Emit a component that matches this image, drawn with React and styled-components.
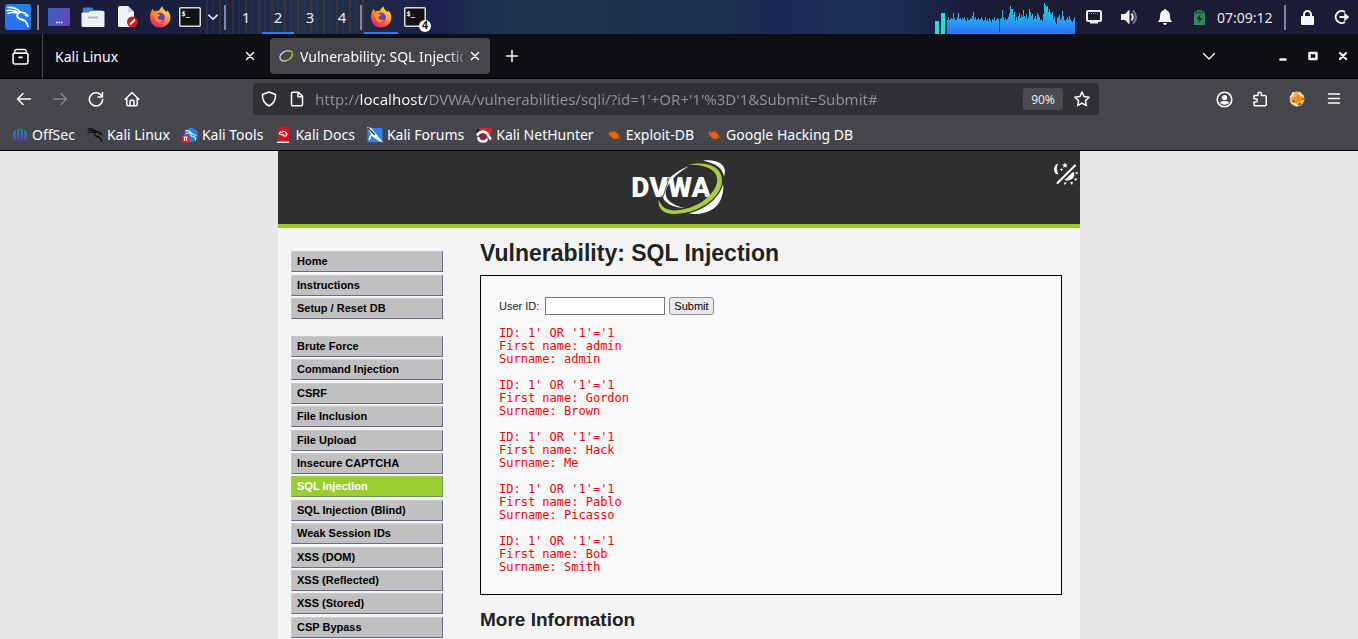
import { useState } from "react";
import styled, { createGlobalStyle } from "styled-components";

const GlobalStyle = createGlobalStyle`
    * {
        box-sizing: border-box;
    }
    html, body {
        margin: 0;
        padding: 0;
    }
    body {
        background: #e7e7e7;
        font-family: "Noto Sans", sans-serif;
        font-size: 14px;
        overflow: hidden;
    }
    button, input {
        font: inherit;
        margin: 0;
    }
    ul {
        list-style: none;
        margin: 0;
        padding: 0;
    }
    svg {
        display: block;
        flex: none;
    }
`;

const Screen = styled.div`
    height: 100vh;
    display: flex;
    flex-direction: column;
    overflow: hidden;
`;

const IconButton = styled.button`
    display: flex;
    align-items: center;
    justify-content: center;
    flex: none;
    width: ${(p) => p.$width || 36}px;
    height: 32px;
    padding: 0;
    border: 0;
    background: none;
    color: ${(p) => (p.$dim ? "#85858c" : "#fbfbfe")};
`;

/* ---------- desktop panel ---------- */

const Panel = styled.header`
    display: flex;
    align-items: stretch;
    height: 34px;
    flex: none;
    color: #e8e8ee;
    background: linear-gradient(90deg, #1a1b34 0%, #1b1f40 14%, #1d2440 17%, #23304a 22%, #232a40 27%, #1b2150 32%, #1f3450 37%, #1e3450 44%, #1d3152 52%, #1b2652 57%, #1d3058 63%, #1b2850 67%, #1b1b34 72%, #1b1b34 100%);
`;

const PanelGroup = styled.div`
    display: flex;
    align-items: stretch;
    background: ${(p) => (p.$striped ? "repeating-linear-gradient(90deg, rgba(90, 70, 50, 0.35) 0 2px, transparent 2px 6px, rgba(30, 60, 120, 0.35) 6px 8px, transparent 8px 13px)" : "none")};
`;

const PanelButton = styled.button`
    display: flex;
    align-items: center;
    justify-content: center;
    width: ${(p) => p.$width}px;
    padding: 0;
    color: inherit;
    background: none;
    border: 0;
    border-top: 2px solid transparent;
    border-bottom: 2px solid ${(p) => (p.$active ? "#2a7fe8" : "transparent")};
    font-size: 15px;
`;

const Divider = styled.span`
    width: 2px;
    height: 25px;
    margin: 0 ${(p) => p.$gap || 0}px;
    align-self: center;
    flex: none;
    background: #85869a;
`;

const Spacer = styled.div`
    flex: 1;
`;

const Clock = styled.time`
    align-self: center;
    width: 65px;
    padding-left: 2px;
    font-size: 14px;
`;

/* ---------- tab strip ---------- */

const TabStrip = styled.div`
    display: flex;
    align-items: center;
    height: 45px;
    flex: none;
    background: #0d0e13;
    border-bottom: 1px solid #000;
    color: #fbfbfe;
`;

const FirefoxView = styled.div`
    display: flex;
    align-items: center;
    justify-content: center;
    align-self: stretch;
    width: 43px;
    padding-right: 2px;
    border-right: 1px solid #45464c;
`;

const Tab = styled.div`
    display: flex;
    align-items: center;
    width: ${(p) => (p.$active ? 220 : 227)}px;
    height: 36px;
    padding: 0 4px 0 ${(p) => (p.$active ? 8 : 12)}px;
    border-radius: 4px;
    background: ${(p) => (p.$active ? "#45464c" : "transparent")};
`;

const TabTitle = styled.button`
    display: flex;
    align-items: center;
    gap: 5px;
    flex: 1;
    min-width: 0;
    padding: 0;
    border: 0;
    background: none;
    color: inherit;
    text-align: left;
    white-space: nowrap;
`;

const TabLabel = styled.span`
    overflow: hidden;
    mask-image: linear-gradient(90deg, #000 90%, transparent 104%);
`;

const WindowControls = styled.div`
    display: flex;
    margin-left: 39px;
`;

/* ---------- navigation bar ---------- */

const NavBar = styled.div`
    display: flex;
    align-items: center;
    height: 40px;
    flex: none;
    padding: 0 6px;
    background: #45464c;
`;

const UrlBox = styled.div`
    display: flex;
    align-items: center;
    flex: 1;
    height: 32px;
    margin: 0 107px 0 103px;
    padding: 0 2px;
    border-radius: 4px;
    background: #303136;
`;

const UrlInput = styled.input`
    flex: 1;
    min-width: 0;
    margin-left: 4px;
    padding: 0;
    border: 0;
    outline: 0;
    font-size: 15px;
    color: transparent;
    background: linear-gradient(90deg, #8f8f96 45px, #fbfbfe 45px 112px, #8f8f96 112px);
    background-clip: text;
`;

const ZoomLevel = styled.button`
    width: 40px;
    height: 22px;
    margin-right: 4px;
    padding: 0;
    border: 0;
    border-radius: 3px;
    background: #4a4b51;
    color: #e6e6ea;
    font-size: 12px;
`;

const Bookmarks = styled.nav`
    display: flex;
    align-items: center;
    gap: 12px;
    height: 32px;
    flex: none;
    padding: 0 12px;
    background: #45464c;
    border-bottom: 1px solid #000;
`;

const Bookmark = styled.a`
    display: flex;
    align-items: center;
    gap: 4px;
    color: #fbfbfe;
    text-decoration: none;
    white-space: nowrap;
`;

/* ---------- DVWA page ---------- */

const PageArea = styled.div`
    flex: 1;
    min-height: 0;
    overflow: hidden;
    background: #e7e7e7;
    font-family: "Liberation Sans", Arial, sans-serif;
    color: #222;
`;

const Container = styled.div`
    max-width: 802px;
    min-height: 100%;
    margin: 0 auto;
    background: #f4f4f4;
`;

const Banner = styled.div`
    display: grid;
    grid-template-columns: 1fr auto 1fr;
    align-items: start;
    padding: 6px 0 8px;
    background: #2f2f2f;
    border-bottom: 4px solid #9cc52b;
`;

const ThemeButton = styled.button`
    justify-self: end;
    margin-top: 4px;
    padding: 0 2px 0 0;
    border: 0;
    background: none;
`;

const Columns = styled.div`
    display: flex;
    gap: 37px;
    padding: 0 18px 0 13px;
`;

const Sidebar = styled.nav`
    display: flex;
    flex-direction: column;
    gap: 17px;
    width: 152px;
    flex: none;
    padding-top: 23px;
`;

const MenuGroup = styled.ul`
    display: flex;
    flex-direction: column;
    justify-content: space-between;
    min-height: ${(p) => p.$minHeight}px;
`;

const MenuLink = styled.a`
    display: block;
    padding: 0 5px;
    border: 1px solid;
    border-color: ${(p) => (p.$active ? "#a3cf48 #6f8f5a #6f8f5a #a3cf48" : "#c9c9c9 #666a8c #666a8c #c9c9c9")};
    background: ${(p) => (p.$active ? "#9acd32" : "#c0c0c0")};
    color: ${(p) => (p.$active ? "#fff" : "#000")};
    font-size: 11px;
    line-height: 19px;
    font-weight: bold;
    text-decoration: none;
    white-space: nowrap;
`;

const Main = styled.main`
    flex: 1;
    min-width: 0;
`;

const Title = styled.h1`
    margin: 0;
    padding: 11px 0 8px;
    font-size: 23px;
    line-height: 28px;
`;

const SubTitle = styled.h2`
    margin: 14px 0 0;
    font-size: 19px;
    line-height: 22px;
`;

const VulnerableBox = styled.section`
    padding: 21px 18px 7px;
    border: 1px solid #000;
    background: #f8fafa;
`;

const QueryForm = styled.form`
    display: flex;
    align-items: center;
    gap: 4px;
    font-size: 11px;
`;

const UserInput = styled.input`
    width: 120px;
    height: 18px;
    padding: 0 2px;
    margin-left: 2px;
    border: 1px solid #777781;
    background: #fff;
`;

const SubmitButton = styled.button`
    height: 18px;
    padding: 0 4px;
    border: 1px solid #8f8f9d;
    border-radius: 3px;
    background: #e9e9ed;
    color: #000;
    font-size: 11px;
`;

const Results = styled.div`
    padding-top: 12px;
    overflow: hidden;
`;

const Result = styled.pre`
    margin: 0 0 13px;
    color: #f00;
    font-family: "DejaVu Sans Mono", monospace;
    font-size: 12px;
    line-height: 13px;
`;

/* ---------- drawings ---------- */

function Dragon({ color }) {
    return (
        <g fill="none" stroke={color} strokeLinecap="round" strokeLinejoin="round">
            <path strokeWidth="1.6" d="M3 3.5C8 3 12 5 15 7.5M2 6.5C7 5.5 11 7 14 9M3 9.5C6 8 10 8.5 13 9.5" />
            <path strokeWidth="1.7" d="M14 8C18 8 21 9 23 12L20.5 11.5M14 8.5C11 11 12 14.5 16 15C20.5 15.5 22 18 23 22.5" />
            <path strokeWidth="1" d="M12 12C13 15 16 16.5 19 17" />
        </g>
    );
}

function KaliLogo() {
    return (
        <svg width="26" height="26" viewBox="0 0 26 26">
            <defs>
                <linearGradient id="kali" x1="0" y1="0" x2="0" y2="1">
                    <stop offset="0" stopColor="#1b84ee" />
                    <stop offset="1" stopColor="#2d6cf6" />
                </linearGradient>
            </defs>
            <rect width="26" height="26" rx="3" fill="url(#kali)" />
            <Dragon color="#fff" />
        </svg>
    );
}

function DesktopIcon() {
    return (
        <svg width="22" height="18" viewBox="0 0 22 18">
            <defs>
                <linearGradient id="desk" x1="0" y1="0" x2="1" y2="0.4">
                    <stop offset="0" stopColor="#3564c8" />
                    <stop offset="1" stopColor="#6548b8" />
                </linearGradient>
            </defs>
            <rect width="22" height="18" rx="1" fill="url(#desk)" />
            <path d="M8 14.5h1.5M10.5 14.5h1.5M13 14.5h1.5" stroke="#fff" strokeWidth="1.5" />
        </svg>
    );
}

function FolderIcon() {
    return (
        <svg width="24" height="20" viewBox="0 0 24 20">
            <path d="M2 2a1.5 1.5 0 0 1 1.500-1.500h7.500l2 2.500h7.500a1.500 1.500 0 0 1 1.500 1.500V9H2z" fill="#3a7ddb" />
            <path d="M0.500 7a1 1 0 0 1 1-1.500h6l2-1.500h13a1 1 0 0 1 1 1V18.500a1.500 1.500 0 0 1-1.500 1.500h-20A1.500 1.500 0 0 1 0.500 18.500z" fill="#eef0f3" />
            <path d="M7 9.500h10v1q0 1-1 1H8q-1 0-1-1z" fill="#b3b6bd" />
        </svg>
    );
}

function DocIcon() {
    return (
        <svg width="22" height="22" viewBox="0 0 22 22">
            <path d="M1 1.500A1.500 1.500 0 0 1 2.500 0H11l6 6v15H2.500A1.500 1.500 0 0 1 1 19.500z" fill="#f1f2f4" />
            <path d="M11 0l6 6h-6z" fill="#cfd2d8" />
            <circle cx="15.500" cy="16" r="5.500" fill="#c8171f" />
            <path d="M13 18.500l5-5" stroke="#fff" strokeWidth="2" />
        </svg>
    );
}

function FirefoxIcon({ id }) {
    return (
        <svg width="22" height="22" viewBox="0 0 22 22">
            <defs>
                <linearGradient id={id} x1="0.8" y1="0.1" x2="0.2" y2="0.9">
                    <stop offset="0" stopColor="#ffdf3e" />
                    <stop offset="0.4" stopColor="#ff9428" />
                    <stop offset="0.75" stopColor="#ff4b3a" />
                    <stop offset="1" stopColor="#e4228a" />
                </linearGradient>
            </defs>
            <path d="M1 12C0.500 8 2 5 4 2.500C4 4 4.500 4.500 5.500 5.200C7 4.500 8.500 4.500 9.500 5C11 2.500 12 1.500 13.500 0.500C13.500 3 16 4 17.500 6C18 5.500 18 5 18 4.200C20.500 6.500 21.800 9 21.300 12.500C20.500 18 16.500 21.500 11 21.500C5.500 21.500 1.500 17.500 1 12z" fill={`url(#${id})`} />
            <circle cx="11.200" cy="11.500" r="4.800" fill="#6b3fc4" />
            <path d="M3.500 8C6 7 8 8 11 8.500C10.500 10 9 10 8.500 11C8.500 13.500 11 14.800 14.500 13.500C12 17.500 6 16.500 5.500 12z" fill="#ff9a2b" />
            <path d="M13 6.500C16 8 16.800 11 15.500 14C18 12 18 7.500 14.500 5z" fill="#ffc233" />
        </svg>
    );
}

const TermBadge = styled.span`
    position: absolute;
    right: -5px;
    bottom: -5px;
    width: 12px;
    height: 12px;
    border-radius: 50%;
    background: #fff;
    color: #111;
    font-size: 11px;
    line-height: 12px;
    font-weight: bold;
    text-align: center;
`;

const TermWrap = styled.span`
    position: relative;
    font-family: "DejaVu Sans Mono", monospace;
`;

function TerminalIcon({ count }) {
    return (
        <TermWrap>
            <svg width="22" height="20" viewBox="0 0 22 20">
                <rect x="0.750" y="0.750" width="20.500" height="18.500" rx="1" fill="#111317" stroke="#d9dadd" strokeWidth="1.500" />
                <text x="2.500" y="9" fontSize="7" fontWeight="bold" fill="#fff">$_</text>
            </svg>
            {count && <TermBadge>{count}</TermBadge>}
        </TermWrap>
    );
}

const load = [
    14, 17, 14, 15, 16, 15, 21, 16, 14, 14, 17, 21, 15, 16, 14, 16, 15, 17, 14, 13, 16, 14, 14, 16, 15, 18, 22, 15, 17, 14, 15, 16,
    14, 15, 17, 15, 13, 14, 17, 13, 15, 13, 16, 14, 12, 15, 14, 17, 13, 14, 16, 15, 2, 15, 16, 24, 17, 14, 16, 14, 15, 17, 21, 28,
    25, 25, 19, 22, 13, 17, 14, 18, 21, 16, 19, 17, 24, 18, 16, 20, 15, 17, 25, 22, 18, 20, 14, 16, 18, 15, 21, 19, 17, 14, 15, 13,
    20, 31, 29, 27, 28, 22, 25, 21, 20, 22, 15, 17, 12, 10, 16, 17, 19, 14, 16, 23, 18, 14, 13, 15, 17, 14, 18, 15, 13, 12, 14, 17,
];

function CpuGraph() {
    return (
        <svg width="140" height="34" viewBox="0 0 140 34" shapeRendering="crispEdges">
            <defs>
                <linearGradient id="cpu" gradientUnits="userSpaceOnUse" x1="0" y1="2" x2="0" y2="34">
                    <stop offset="0" stopColor="#17d9e8" />
                    <stop offset="0.550" stopColor="#25a6ee" />
                    <stop offset="1" stopColor="#2c70fb" />
                </linearGradient>
            </defs>
            <path d="M0 21h4v13h-4zM6 13h4v21h-4z" fill="#1be3d5" />
            <path d={load.map((h, i) => `M${12 + i} ${34 - h}h1v${h}h-1z`).join("")} fill="url(#cpu)" />
        </svg>
    );
}

function ScreenIcon() {
    return (
        <svg width="16" height="14" viewBox="0 0 16 14">
            <rect x="1" y="1" width="14" height="10" rx="1" fill="none" stroke="#eee" strokeWidth="2" />
            <path d="M4 12.500h8" stroke="#eee" strokeWidth="2" />
            <path d="M3 3.500h10" stroke="#8a8b9a" strokeDasharray="1 1" />
        </svg>
    );
}

function SpeakerIcon() {
    return (
        <svg width="18" height="16" viewBox="0 0 18 16" fill="none">
            <path d="M0 5h4l4.500-4.500v15L4 11H0z" fill="#f2f2f4" />
            <path d="M10.500 4.500q2.500 3.500 0 7" stroke="#f2f2f4" strokeWidth="2" />
            <path d="M12 1.500q6 6.500 0 13" stroke="#77788a" strokeWidth="2" />
        </svg>
    );
}

function BellIcon() {
    return (
        <svg width="14" height="16" viewBox="0 0 14 16" fill="#f4f4f6">
            <path d="M7 0q1.200 0 1.200 1.300C11 2 12 4.500 12 7c0 3 0.500 4.500 2 5.500v0.500H0v-0.500C1.500 11.500 2 10 2 7c0-2.500 1-5 3.800-5.700Q5.800 0 7 0zM5 14h4q-0.500 2-2 2t-2-2z" />
        </svg>
    );
}

function BatteryIcon() {
    return (
        <svg width="11" height="15" viewBox="0 0 11 15">
            <path d="M3 0h5v1.500h3V15H0V1.500h3z" fill="#2d8a5c" />
            <path d="M0 1.500h11v2H0z" fill="#1c5a44" />
            <path d="M6.500 4L2.500 9h2.300v3.500L8.500 8H6z" fill="#0f2a2a" />
        </svg>
    );
}

function LockIcon() {
    return (
        <svg width="13" height="15" viewBox="0 0 13 15">
            <rect y="6" width="13" height="9" rx="1" fill="#f4f4f6" />
            <path d="M3 7V4.500a3.500 3.500 0 0 1 7 0V7" fill="none" stroke="#f4f4f6" strokeWidth="2" />
        </svg>
    );
}

function LogoutIcon() {
    return (
        <svg width="17" height="16" viewBox="0 0 17 16" fill="none" stroke="#f4f4f6" strokeWidth="2">
            <path d="M12 3A6 6 0 1 0 12 13" />
            <path d="M6.500 8h7" />
            <path d="M11.500 4l4.500 4-4.500 4z" fill="#f4f4f6" strokeWidth="0.500" />
        </svg>
    );
}

function LineIcon({ size = 16, d, width = 1.5 }) {
    return (
        <svg width={size} height={size} viewBox="0 0 16 16" fill="none" stroke="currentColor" strokeWidth={width} strokeLinecap="round" strokeLinejoin="round">
            <path d={d} />
        </svg>
    );
}

const lines = {
    view: "M2.500 3.200q0.300-1.800 2-1.800h7q1.700 0 2 1.800M2.300 4.800h11.400a1.300 1.300 0 0 1 1.300 1.300v7.400a1.500 1.500 0 0 1-1.500 1.500h-11a1.500 1.500 0 0 1-1.500-1.500V6.100a1.300 1.300 0 0 1 1.300-1.300zM6.500 8.800h3",
    close: "M4.500 4.500l7 7M11.500 4.500l-7 7",
    plus: "M8 2.500v11M2.500 8h11",
    chevron: "M2.500 5.500l5.500 5.500 5.500-5.500",
    minimise: "M5.500 11.500h5",
    maximise: "M4.500 5h7v6h-7z",
    back: "M7 2.500L1.500 8 7 13.500M1.500 8h13",
    forward: "M9 2.500L14.500 8 9 13.500M14.500 8h-13",
    reload: "M13.800 5.200A6.600 6.600 0 1 0 14.600 8.500M14.500 1.500v4.500h-4.500",
    home: "M1.200 8.200L8 1.500l6.800 6.700M2.800 7v6.500a1.300 1.300 0 0 0 1.300 1.300h7.800a1.300 1.300 0 0 0 1.300-1.300V7M6 14.500v-4a1.200 1.200 0 0 1 1.200-1.200h1.600a1.200 1.200 0 0 1 1.200 1.200v4",
    shield: "M8 1L14.500 3.500C14.800 8.500 13 12.500 8 15C3 12.500 1.200 8.500 1.500 3.500z",
    page: "M3.500 1.200h6l4 4v8.300a1.300 1.300 0 0 1-1.300 1.300H3.800a1.300 1.300 0 0 1-1.300-1.300V2.200a1 1 0 0 1 1-1zM9 1.500v4.200h4.200",
    star: "M8 1l2.100 4.600 5 0.600-3.700 3.400 1 5L8 12.100l-4.400 2.500 1-5L0.900 6.200l5-0.600z",
    puzzle: "M2 6V4.500h4V3a1.700 1.700 0 0 1 3.400 0v1.500h3.800a1 1 0 0 1 1 1v8.300a1 1 0 0 1-1 1H3a1 1 0 0 1-1-1V11h1.700a1.600 1.600 0 0 0 0-3.200H2z",
    menu: "M2.500 3h11M2.500 7.500h11M2.500 12h11",
};

function AccountIcon() {
    return (
        <svg width="17" height="17" viewBox="0 0 17 17">
            <circle cx="8.500" cy="8.500" r="7.300" fill="none" stroke="#fbfbfe" strokeWidth="1.600" />
            <circle cx="8.500" cy="6.500" r="2.600" fill="#fbfbfe" />
            <path d="M3.800 12q1-2 3-2h3.400q2 0 3 2q-4.700 3.500-9.400 0z" fill="#fbfbfe" />
        </svg>
    );
}

function CookieIcon() {
    return (
        <svg width="16" height="16" viewBox="0 0 16 16">
            <circle cx="8" cy="8" r="7.500" fill="#e5b566" />
            <path d="M1 6q3-1 3-5M11 1q-2 3 3.500 4M2 12q3-1 6 3" fill="none" stroke="#f6ead0" strokeWidth="1.500" />
            <path d="M3 7l4-1 2-3 2 3 2-1-1 4-2 2-3 1-3-1z" fill="#ef8a12" />
            <path d="M3.500 10.500h2M9 13h3M12.500 8h2" stroke="#7a4312" strokeWidth="1.500" />
        </svg>
    );
}

function OffSecIcon() {
    return (
        <svg width="16" height="16" viewBox="0 0 16 16">
            <defs>
                <linearGradient id="offsec" x1="0" y1="0" x2="0" y2="1">
                    <stop offset="0" stopColor="#1c97a8" />
                    <stop offset="1" stopColor="#5b35c4" />
                </linearGradient>
            </defs>
            <path d="M7.300 1v14C4 13 4 3 7.300 1zM8.700 1v14c3.300-2 3.300-12 0-14zM4.500 1.800C-0.500 4.500-0.500 11.500 4.500 14.200C3.200 10 3.200 6 4.500 1.800zM11.500 1.800c5 2.700 5 9.700 0 12.400c1.300-4.200 1.300-8.200 0-12.400z" fill="url(#offsec)" />
        </svg>
    );
}

function KaliLinuxIcon() {
    return (
        <svg width="16" height="16" viewBox="1 1 24 24">
            <Dragon color="#0b0b0d" />
        </svg>
    );
}

function KaliToolsIcon() {
    return (
        <svg width="16" height="16" viewBox="0 0 16 16">
            <circle cx="9" cy="8" r="7" fill="#2a7de1" />
            <path d="M3 4q4-1 6 1.500t5 3M4 6.500q3-1 5 0M9 6q-1 3 2 3.500t2.500 4" fill="none" stroke="#d8e9ff" strokeWidth="1.200" />
            <rect y="8" width="7" height="8" rx="1.500" fill="#dd2430" />
            <path d="M1.500 10h4M2.500 10v4M4.500 10v4" stroke="#fff" />
        </svg>
    );
}

function KaliDocsIcon() {
    return (
        <svg width="16" height="16" viewBox="0 0 16 16">
            <path d="M2 0h12v14H2z" fill="#d3151d" />
            <path d="M2 14.500h12v1.500H2z" fill="#f0dede" />
            <path d="M6 4.500L4.200 6.500q1 1.500 3.300 1l2.500 2M10 5l2 2-1.500 2.500M10 4.500Q7 4 7 6" fill="none" stroke="#fff" strokeWidth="1.200" />
        </svg>
    );
}

function KaliForumsIcon() {
    return (
        <svg width="16" height="16" viewBox="0 0 16 16">
            <rect x="0.500" y="1" width="15" height="14" fill="#2a86ea" />
            <path d="M0 0l4 1 6 7 6 7.500-5-2L5 9z" fill="#fff" />
            <path d="M1 1l7 7" stroke="#26303c" strokeWidth="1.200" />
            <path d="M4 8l-2 5" stroke="#fff" strokeWidth="1.500" />
        </svg>
    );
}

function NetHunterIcon() {
    return (
        <svg width="16" height="16" viewBox="0 0 16 16">
            <path d="M3 1h13l-3 12z" fill="#d8232e" />
            <path d="M1 8.500C3 4.500 9 3 11.500 7q1.500 3 3.500 5.500" fill="none" stroke="#fff" strokeWidth="2.500" />
            <path d="M2.500 10q-0.500 4 4 4.500t4-3" fill="none" stroke="#fff" strokeWidth="2.500" />
            <path d="M4 8.500q3-2 5 0.500l-1.500 3q-3 0-3.500-3.500z" fill="#b8101f" />
            <path d="M0 5l3-2.500" stroke="#111" strokeWidth="1.500" />
        </svg>
    );
}

function ExploitIcon() {
    return (
        <svg width="16" height="16" viewBox="0 0 16 16">
            <path d="M2 6q3-2 6-1.500 4 1 5 4.500 0 3-3 3-4 0-6.500-4z" fill="#e8620d" />
            <path d="M3 4l3 2M9 4.500l2-1.500M3 9l-2 0.500M8 12l-1 1.500M13 9l1.500 4" stroke="#b84a08" />
        </svg>
    );
}

function DvwaMark() {
    return (
        <svg width="17" height="16" viewBox="0 0 17 16" fill="none">
            <path d="M13 3.500C8 1 1.500 5.500 2 10q1 3.500 6 3" stroke="#c9cdd0" strokeWidth="1.300" />
            <path d="M9 3q5-1 5.500 3c0 4-5 7.500-9.500 7" stroke="#9cb83e" strokeWidth="1.500" />
        </svg>
    );
}

function DvwaLogo() {
    return (
        <svg width="100" height="59" viewBox="90 20 300 177" role="img" aria-label="DVWA">
            <path d="M270 47C228 62 194 94 189 122C185 152 215 172 258 173C222 166 198 150 200 125C204 98 232 70 270 47z" fill="#fff" />
            <text x="97" y="141" fontFamily="Roboto, sans-serif" fontWeight="900" fontSize="84" fill="#fff">DVWA</text>
            <path d="M190 146L211 82" stroke="#2f2f2f" strokeWidth="2.500" />
            <path d="M312 31C345 26 376 36 378 62L375 80C374 56 350 38 312 31z" fill="#fff" />
            <path d="M372 100C366 138 322 176 268 189C310 196 348 182 363 152C371 136 375 116 372 100z" fill="#fff" />
            <path d="M266 43C330 30 372 52 369 96C362 150 290 191 225 191C194 191 176 175 179 148C188 172 206 182 235 180C298 174 349 132 355 92C356 60 326 42 266 43z" fill="#a9cf38" />
        </svg>
    );
}

function ThemeIcon() {
    return (
        <svg width="25" height="26" viewBox="0 0 25 26">
            <path d="M5.500 2.500C1 3.500-0.500 9 3 13l2.500 0.500C3.500 9.500 3 6 5.500 2.500z" fill="#fff" />
            <path d="M12 1.500l0.800 1.800 2 0.200-1.500 1.300 0.500 2-1.800-1-1.800 1 0.500-2-1.500-1.300 2-0.200zM8.500 7l0.600 1.100 1.400 0.400-1.400 0.600L8.500 10.500l-0.600-1.400L6.500 8.500l1.400-0.400z" fill="#fff" />
            <path d="M22 4.500L4.500 22" stroke="#fff" strokeWidth="2" strokeLinecap="round" />
            <path d="M20.500 10.500q2 4-1 7t-8 1.500z" fill="#fff" />
            <path d="M22 12l2.500-1.500v3zM21.500 17l3 1-2.500 2zM17 21l3 0-1 3zM11 21.500l3 0-2.500 2.500z" fill="#fff" />
        </svg>
    );
}

/* ---------- content ---------- */

const bookmarks = [
    { label: "OffSec", Icon: OffSecIcon },
    { label: "Kali Linux", Icon: KaliLinuxIcon },
    { label: "Kali Tools", Icon: KaliToolsIcon },
    { label: "Kali Docs", Icon: KaliDocsIcon },
    { label: "Kali Forums", Icon: KaliForumsIcon },
    { label: "Kali NetHunter", Icon: NetHunterIcon },
    { label: "Exploit-DB", Icon: ExploitIcon },
    { label: "Google Hacking DB", Icon: ExploitIcon },
];

const menu = [
    { minHeight: 68, items: ["Home", "Instructions", "Setup / Reset DB"] },
    {
        minHeight: 302,
        items: [
            "Brute Force", "Command Injection", "CSRF", "File Inclusion", "File Upload", "Insecure CAPTCHA", "SQL Injection",
            "SQL Injection (Blind)", "Weak Session IDs", "XSS (DOM)", "XSS (Reflected)", "XSS (Stored)", "CSP Bypass",
        ],
    },
];

const rows = [
    ["admin", "admin"],
    ["Gordon", "Brown"],
    ["Hack", "Me"],
    ["Pablo", "Picasso"],
    ["Bob", "Smith"],
];

function DesktopPanel() {
    const [workspace, setWorkspace] = useState(2);

    return (
        <Panel>
            <PanelButton $width={36} aria-label="Applications"><KaliLogo /></PanelButton>
            <Divider $gap={1} />
            <PanelButton $width={37} aria-label="Show desktop"><DesktopIcon /></PanelButton>
            <PanelButton $width={32} aria-label="Files"><FolderIcon /></PanelButton>
            <PanelButton $width={37} aria-label="Text editor"><DocIcon /></PanelButton>
            <PanelButton $width={28} aria-label="Firefox"><FirefoxIcon id="ff1" /></PanelButton>
            <PanelButton $width={32} aria-label="Terminal"><TerminalIcon /></PanelButton>
            <PanelGroup $striped>
                <PanelButton $width={14} aria-label="More terminals"><LineIcon size={12} d={lines.chevron} width={2.2} /></PanelButton>
                <Divider $gap={4} />
                {[1, 2, 3, 4].map((n) => (
                    <PanelButton key={n} $width={32} $active={n === workspace} onClick={() => setWorkspace(n)}>{n}</PanelButton>
                ))}
                <Divider $gap={2} />
            </PanelGroup>
            <PanelButton $width={34} $active aria-label="Firefox window"><FirefoxIcon id="ff2" /></PanelButton>
            <PanelButton $width={34} aria-label="Terminal windows"><TerminalIcon count={4} /></PanelButton>
            <Spacer />
            <CpuGraph />
            <PanelButton $width={38} aria-label="Display"><ScreenIcon /></PanelButton>
            <PanelButton $width={34} aria-label="Volume"><SpeakerIcon /></PanelButton>
            <PanelButton $width={36} aria-label="Notifications"><BellIcon /></PanelButton>
            <PanelButton $width={32} aria-label="Battery"><BatteryIcon /></PanelButton>
            <Clock>07:09:12</Clock>
            <Divider $gap={4} />
            <PanelButton $width={34} aria-label="Lock screen"><LockIcon /></PanelButton>
            <PanelButton $width={34} aria-label="Log out"><LogoutIcon /></PanelButton>
        </Panel>
    );
}

function Tabs() {
    return (
        <TabStrip>
            <FirefoxView>
                <IconButton aria-label="Firefox View"><LineIcon size={17} d={lines.view} /></IconButton>
            </FirefoxView>
            <Tab>
                <TabTitle>Kali Linux</TabTitle>
                <IconButton $width={32} aria-label="Close Kali Linux"><LineIcon d={lines.close} /></IconButton>
            </Tab>
            <Tab $active>
                <TabTitle><DvwaMark /><TabLabel>Vulnerability: SQL Injection</TabLabel></TabTitle>
                <IconButton $width={23} aria-label="Close tab"><LineIcon d={lines.close} /></IconButton>
            </Tab>
            <IconButton $width={43} aria-label="New tab"><LineIcon d={lines.plus} /></IconButton>
            <Spacer />
            <IconButton $width={40} aria-label="List all tabs"><LineIcon d={lines.chevron} width={1.3} /></IconButton>
            <WindowControls>
                <IconButton $width={30} aria-label="Minimise"><LineIcon d={lines.minimise} width={2.5} /></IconButton>
                <IconButton $width={30} aria-label="Maximise"><LineIcon d={lines.maximise} width={2.5} /></IconButton>
                <IconButton $width={30} aria-label="Close window"><LineIcon d={lines.close} width={2.5} size={14} /></IconButton>
            </WindowControls>
        </TabStrip>
    );
}

function Navigation() {
    const [url, setUrl] = useState("http://localhost/DVWA/vulnerabilities/sqli/?id=1'+OR+'1'%3D'1&Submit=Submit#");

    return (
        <NavBar>
            <IconButton aria-label="Back"><LineIcon d={lines.back} /></IconButton>
            <IconButton $dim aria-label="Forward"><LineIcon d={lines.forward} /></IconButton>
            <IconButton aria-label="Reload"><LineIcon d={lines.reload} /></IconButton>
            <IconButton aria-label="Home"><LineIcon d={lines.home} /></IconButton>
            <UrlBox>
                <IconButton $width={28} aria-label="Tracking protection"><LineIcon d={lines.shield} /></IconButton>
                <IconButton $width={28} aria-label="Site information"><LineIcon d={lines.page} /></IconButton>
                <UrlInput aria-label="Address" value={url} onChange={(e) => setUrl(e.target.value)} />
                <ZoomLevel>90%</ZoomLevel>
                <IconButton $width={30} aria-label="Bookmark this page"><LineIcon d={lines.star} /></IconButton>
            </UrlBox>
            <IconButton aria-label="Account"><AccountIcon /></IconButton>
            <IconButton aria-label="Extensions"><LineIcon d={lines.puzzle} /></IconButton>
            <IconButton $width={38} aria-label="Cookie editor"><CookieIcon /></IconButton>
            <IconButton aria-label="Menu"><LineIcon d={lines.menu} /></IconButton>
        </NavBar>
    );
}

export default function App() {
    const [userId, setUserId] = useState("");

    return (
        <Screen>
            <GlobalStyle />
            <DesktopPanel />
            <Tabs />
            <Navigation />
            <Bookmarks>
                {bookmarks.map(({ label, Icon }) => (
                    <Bookmark key={label} href="#"><Icon />{label}</Bookmark>
                ))}
            </Bookmarks>
            <PageArea>
                <Container>
                    <Banner>
                        <span />
                        <DvwaLogo />
                        <ThemeButton aria-label="Toggle theme"><ThemeIcon /></ThemeButton>
                    </Banner>
                    <Columns>
                        <Sidebar>
                            {menu.map((group) => (
                                <MenuGroup key={group.minHeight} $minHeight={group.minHeight}>
                                    {group.items.map((item) => (
                                        <li key={item}>
                                            <MenuLink href="#" $active={item === "SQL Injection"}>{item}</MenuLink>
                                        </li>
                                    ))}
                                </MenuGroup>
                            ))}
                        </Sidebar>
                        <Main>
                            <Title>Vulnerability: SQL Injection</Title>
                            <VulnerableBox>
                                <QueryForm onSubmit={(e) => e.preventDefault()}>
                                    <label htmlFor="user-id">User ID:</label>
                                    <UserInput id="user-id" type="text" value={userId} onChange={(e) => setUserId(e.target.value)} />
                                    <SubmitButton type="submit">Submit</SubmitButton>
                                </QueryForm>
                                <Results>
                                    {rows.map(([first, last]) => (
                                        <Result key={first}>{`ID: 1' OR '1'='1\nFirst name: ${first}\nSurname: ${last}`}</Result>
                                    ))}
                                </Results>
                            </VulnerableBox>
                            <SubTitle>More Information</SubTitle>
                        </Main>
                    </Columns>
                </Container>
            </PageArea>
        </Screen>
    );
}
